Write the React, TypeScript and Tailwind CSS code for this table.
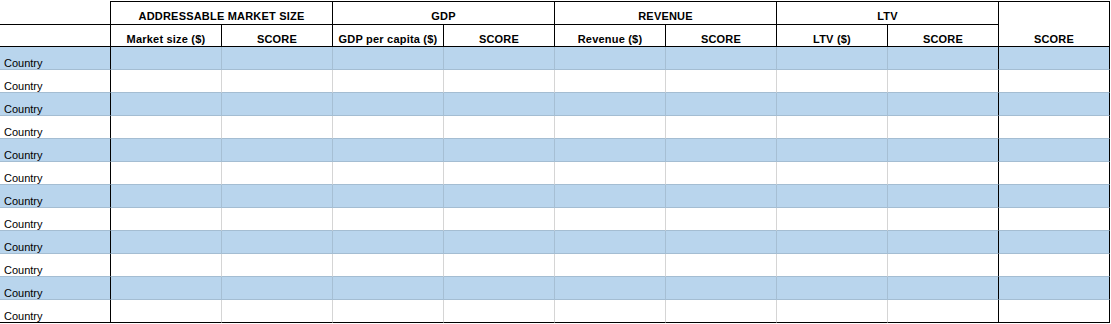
const GROUPS = ["ADDRESSABLE MARKET SIZE", "GDP", "REVENUE", "LTV"];
const SUBS = [
  "Market size ($)",
  "SCORE",
  "GDP per capita ($)",
  "SCORE",
  "Revenue ($)",
  "SCORE",
  "LTV ($)",
  "SCORE",
];

const ROWS = Array.from({ length: 12 }, (_, i) => i);

export default function App() {
  return (
    <div className="w-[1111px] h-[324px] bg-white pt-px text-black font-['Liberation_Sans',Arial,sans-serif]">
      <div className="grid grid-cols-[repeat(10,111px)] grid-rows-[24px_22px_repeat(12,23px)]">
        {/* header row 1 */}
        <div className="border-b border-r border-black" />
        {GROUPS.map((g) => (
          <div
            key={g}
            className="col-span-2 flex items-end justify-center pb-[2px] border-t border-b border-r border-black text-[11px] leading-[12px] font-bold tracking-[0.2px]"
          >
            {g}
          </div>
        ))}
        <div className="row-span-2 flex items-end justify-center pb-px border-t border-b border-r border-black text-[11px] leading-[12px] font-bold tracking-[0.2px]">
          SCORE
        </div>

        {/* header row 2 */}
        <div className="border-b border-r border-black" />
        {SUBS.map((s, i) => (
          <div
            key={i}
            className="flex items-end justify-center pb-px border-b border-r border-black text-[11px] leading-[12px] font-bold tracking-[0.2px]"
          >
            {s}
          </div>
        ))}

        {/* data rows */}
        {ROWS.map((r) => {
          const blue = r % 2 === 0;
          const last = r === ROWS.length - 1;
          const bg = blue ? "bg-[#b9d5ed]" : "bg-white";
          const bottom = last ? "border-b-black" : "border-b-[#a4bdd2]";
          const side = blue ? "border-r-[#a6bfd4]" : "border-r-[#d5d5d5]";
          return (
            <div key={r} className="contents">
              <div
                className={`flex items-end pl-[4px] border-b border-r border-r-black text-[11px] leading-[12px] ${bg} ${bottom}`}
              >
                Country
              </div>
              {Array.from({ length: 9 }, (_, c) => (
                <div
                  key={c}
                  className={`border-b border-r ${bg} ${bottom} ${
                    c >= 7 ? "border-r-black" : side
                  }`}
                />
              ))}
            </div>
          );
        })}
      </div>
    </div>
  );
}
